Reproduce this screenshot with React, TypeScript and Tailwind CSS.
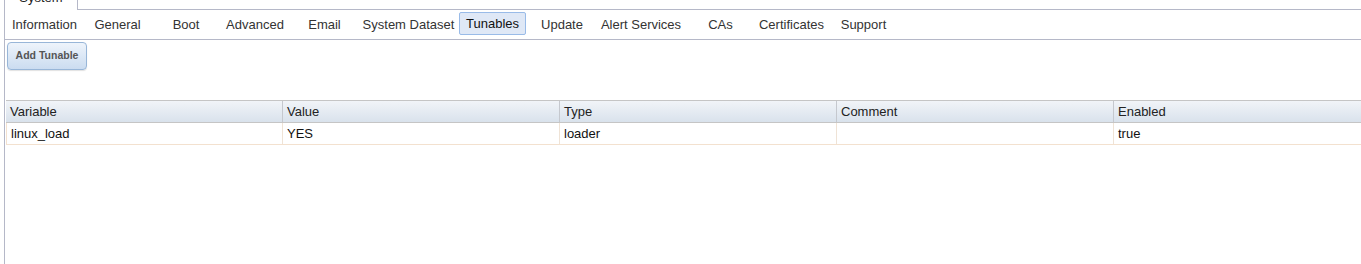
import React from 'react'

const tabs = [
  { label: 'Information', w: 'w-[79px]' },
  { label: 'General', w: 'w-[67px]' },
  { label: 'Boot', w: 'w-[70px]' },
  { label: 'Advanced', w: 'w-[68px]' },
  { label: 'Email', w: 'w-[71px]' },
  { label: 'System Dataset', w: 'w-[97px]' },
  { label: 'Tunables', w: 'w-[75px]', active: true },
  { label: 'Update', w: 'w-[60px]' },
  { label: 'Alert Services', w: 'w-[98px]' },
  { label: 'CAs', w: 'w-[61px]' },
  { label: 'Certificates', w: 'w-[81px]' },
  { label: 'Support', w: 'w-[63px]' },
]

const columns = [
  { label: 'Variable', key: 'variable', w: 'w-[277px]' },
  { label: 'Value', key: 'value', w: 'w-[277px]' },
  { label: 'Type', key: 'type', w: 'w-[277px]' },
  { label: 'Comment', key: 'comment', w: 'w-[277px]' },
  { label: 'Enabled', key: 'enabled', w: 'w-[277px]' },
]

const rows = [
  { id: 1, variable: 'linux_load', value: 'YES', type: 'loader', comment: '', enabled: 'true' },
]

export default function App() {
  return (
    <div className="w-[1361px] h-[264px] overflow-hidden bg-white font-['Liberation_Sans',Arial,sans-serif] text-[13px] text-[#333]">
      <div className="ml-[4px] h-full border-l border-[#b5b8c8] flex flex-col">
        {/* outer tab strip, the active "System" tab is scrolled mostly out of view */}
        <div className="flex h-[10px] shrink-0">
          <div className="w-[73px] h-[10px] border-r border-[#b5b8c8] overflow-hidden text-center">
            <div className="-mt-[10px] leading-[16px] text-[#222]">System</div>
          </div>
          <div className="flex-1 border-b border-[#b5b8c8]" />
        </div>

        {/* sub tabs */}
        <div className="flex items-center h-[30px] shrink-0 border-b border-[#b5b8c8]">
          {tabs.map((tab) => (
            <div key={tab.label} className={`${tab.w} shrink-0 flex ${tab.active ? 'justify-start' : 'justify-center'}`}>
              {tab.active ? (
                <span className="ml-[2px] w-[67px] h-[23px] -mt-[2px] flex items-center justify-center bg-[#dfe8f6] border border-[#99bbe8] rounded-[2px] text-[#111]">{tab.label}</span>
              ) : (
                <span className="whitespace-nowrap">{tab.label}</span>
              )}
            </div>
          ))}
        </div>

        <div className="pt-[2px] pl-[2px]">
          <button className="w-[80px] h-[28px] rounded-[4px] border border-[#98b6d8] bg-gradient-to-b from-[#eef4fb] to-[#cbdcf0] shadow-[0_1px_1px_rgba(0,0,0,0.12)] text-[10.5px] font-bold text-[#555]">
            Add Tunable
          </button>
        </div>

        {/* grid */}
        <div className="mt-[30px] ml-[1px] w-[1400px]">
          <div className="flex h-[23px] border-t border-b border-[#c5c5c5] bg-gradient-to-b from-[#f1f4f8] to-[#d9e2ec] text-[#222]">
            {columns.map((c) => (
              <div key={c.key} className={`${c.w} shrink-0 border-r border-[#c5c8ce] pl-[4px] flex items-center`}>{c.label}</div>
            ))}
          </div>
          {rows.map((r: any) => (
            <div key={r.id} className="flex h-[22px] border-b border-l border-[#f3e1cf] text-[#111]">
              {columns.map((c, i) => (
                <div key={c.key} className={`${i === 0 ? 'w-[276px]' : c.w} shrink-0 border-r border-[#efe3d6] pl-[4px] flex items-center`}>{r[c.key]}</div>
              ))}
            </div>
          ))}
        </div>
      </div>
    </div>
  )
}
